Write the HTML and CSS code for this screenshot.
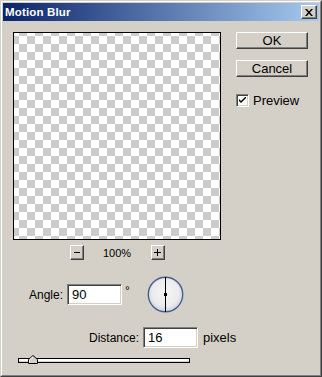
FILE: index.html
```html
<!DOCTYPE html>
<html>
<head>
<meta charset="utf-8">
<link rel="stylesheet" href="styles.css">
</head>
<body>
<div class="frame">
  <div class="frame-inner">
    <div class="titlebar">
      <span class="title">Motion Blur</span>
      <span class="close">
        <svg width="8" height="7" viewBox="0 0 8 7"><path d="M0 0h2l2 2.5L6 0h2L5 3.5 8 7H6L4 4.5 2 7H0l3-3.5z" fill="#000"/></svg>
      </span>
    </div>
    <div class="body">
      <div class="top">
        <div class="preview-col">
          <div class="preview"></div>
          <div class="zoom-row">
            <span class="zbtn">
              <svg width="6" height="1" viewBox="0 0 6 1"><rect width="6" height="1" fill="#000"/></svg>
            </span>
            <span class="zoom-val">100%</span>
            <span class="zbtn">
              <svg width="7" height="7" viewBox="0 0 7 7"><path d="M3 0h1v3h3v1H4v3H3V4H0V3h3z" fill="#000"/></svg>
            </span>
          </div>
        </div>
        <div class="side">
          <div class="btn">OK</div>
          <div class="btn btn-gap">Cancel</div>
          <label class="check-row">
            <span class="checkbox">
              <svg width="7" height="7" viewBox="0 0 7 7"><path d="M0 2l2 2 5-5v2L2 6 0 4z" fill="#000"/></svg>
            </span>
            <span>Preview</span>
          </label>
        </div>
      </div>
      <div class="angle-row">
        <span class="lbl lbl-angle">Angle:</span>
        <span class="field">90</span>
        <span class="deg">°</span>
        <svg class="dial" width="37" height="37" viewBox="0 0 37 37">
          <defs>
            <radialGradient id="g" cx="50%" cy="45%" r="55%">
              <stop offset="0" stop-color="#f6f6f6"/>
              <stop offset="0.7" stop-color="#ececec"/>
              <stop offset="1" stop-color="#cfd3da"/>
            </radialGradient>
          </defs>
          <circle cx="18.5" cy="18.5" r="17.2" fill="url(#g)" stroke="#4a5f8f" stroke-width="1.4"/>
          <rect x="18" y="1" width="1" height="35" fill="#000"/>
          <rect x="17" y="17" width="3" height="3" fill="#000"/>
        </svg>
      </div>
      <div class="dist-row">
        <span class="lbl lbl-dist">Distance:</span>
        <span class="field">16</span>
        <span class="unit">pixels</span>
      </div>
      <div class="slider">
        <div class="track"></div>
        <svg class="thumb" width="10" height="9" viewBox="0 0 10 9">
          <path d="M0.5 8.5V4.5L5 0.5l4.5 4v4z" fill="#d4d0c8" stroke="#000"/>
          <path d="M1.5 7.5V4.9L5 1.8" fill="none" stroke="#fff"/>
        </svg>
      </div>
    </div>
  </div>
</div>
</body>
</html>
```
FILE: styles.css
```css
html, body {
  margin: 0;
  padding: 0;
  background: #d4d0c8;
}
.frame {
  width: 322px;
  height: 377px;
  box-sizing: border-box;
  border: 1px solid;
  border-color: #d4d0c8 #404040 #404040 #d4d0c8;
  background: #d4d0c8;
  font-family: "Liberation Sans", Arial, sans-serif;
  font-size: 12px;
  color: #000;
}
.frame-inner {
  height: 100%;
  box-sizing: border-box;
  border: 1px solid;
  border-color: #fff #808080 #808080 #fff;
  padding: 1px;
  display: flex;
  flex-direction: column;
}
.titlebar {
  height: 18px;
  flex: none;
  background: linear-gradient(to right, #0a246a, #a6caf0);
  display: flex;
  align-items: center;
  justify-content: space-between;
  padding: 0 2px 0 2px;
}
.title {
  color: #fff;
  font-weight: bold;
  font-size: 11.5px;
  letter-spacing: 0.15px;
}
.close {
  width: 16px;
  height: 14px;
  box-sizing: border-box;
  background: #d4d0c8;
  border: 1px solid;
  border-color: #fff #404040 #404040 #fff;
  box-shadow: inset -1px -1px #808080;
  display: flex;
  align-items: center;
  justify-content: center;
}
.body {
  padding: 11px 0 0 10px;
  display: flex;
  flex-direction: column;
}
.top {
  display: flex;
}
.preview-col {
  width: 208px;
  display: flex;
  flex-direction: column;
}
.preview {
  width: 208px;
  height: 208px;
  box-sizing: border-box;
  border: 1px solid #000;
  background: conic-gradient(#cccccc 25%, #ffffff 0 50%, #cccccc 0 75%, #ffffff 0) -3px -5px / 16px 16px;
}
.zoom-row {
  margin-top: 5px;
  display: flex;
  justify-content: center;
  align-items: center;
  height: 15px;
}
.zbtn {
  width: 14px;
  height: 15px;
  box-sizing: border-box;
  border: 1px solid;
  border-color: #fff #404040 #404040 #fff;
  box-shadow: inset -1px -1px #808080;
  display: flex;
  align-items: center;
  justify-content: center;
}
.zoom-val {
  width: 67px;
  text-align: center;
  font-size: 11px;
}
.side {
  margin-left: 15px;
  display: flex;
  flex-direction: column;
}
.btn {
  width: 72px;
  height: 17px;
  box-sizing: border-box;
  border: 1px solid;
  border-color: #fff #404040 #404040 #fff;
  box-shadow: inset -1px -1px #808080;
  display: flex;
  align-items: center;
  justify-content: center;
  font-size: 13px;
}
.btn-gap {
  margin-top: 11px;
}
.check-row {
  margin-top: 16px;
  display: flex;
  align-items: center;
  gap: 4px;
  font-size: 13px;
}
.checkbox {
  width: 13px;
  height: 13px;
  box-sizing: border-box;
  background: #fff;
  border: 1px solid;
  border-color: #808080 #fff #fff #808080;
  box-shadow: inset 1px 1px #404040, inset -1px -1px #d4d0c8;
  display: flex;
  align-items: center;
  justify-content: center;
}
.angle-row {
  margin-top: 16px;
  height: 37px;
  display: flex;
  align-items: center;
}
.lbl {
  text-align: right;
  padding-right: 4px;
  box-sizing: border-box;
}
.lbl-angle {
  width: 54px;
}
.lbl-dist {
  width: 130px;
}
.field {
  width: 55px;
  height: 21px;
  box-sizing: border-box;
  background: #fff;
  border: 1px solid;
  border-color: #808080 #fff #fff #808080;
  box-shadow: inset 1px 1px #404040, inset -1px -1px #d4d0c8;
  padding-left: 4px;
  display: flex;
  align-items: center;
  font-size: 13px;
}
.deg {
  width: 25px;
  box-sizing: border-box;
  padding-left: 3px;
  align-self: flex-start;
  margin-top: 8px;
  font-size: 12px;
}
.dial {
  display: block;
}
.dist-row {
  margin-top: 14px;
  height: 21px;
  display: flex;
  align-items: center;
}
.unit {
  margin-left: 5px;
  font-size: 13px;
}
.slider {
  position: relative;
  margin: 7px 0 0 5px;
  width: 172px;
  height: 9px;
}
.track {
  margin-top: 3px;
  height: 5px;
  box-sizing: border-box;
  border: 1px solid #000;
  background: #fff;
  box-shadow: inset 0 -1px #d4d0c8;
}
.thumb {
  position: absolute;
  left: 10px;
  top: 0;
}
```
